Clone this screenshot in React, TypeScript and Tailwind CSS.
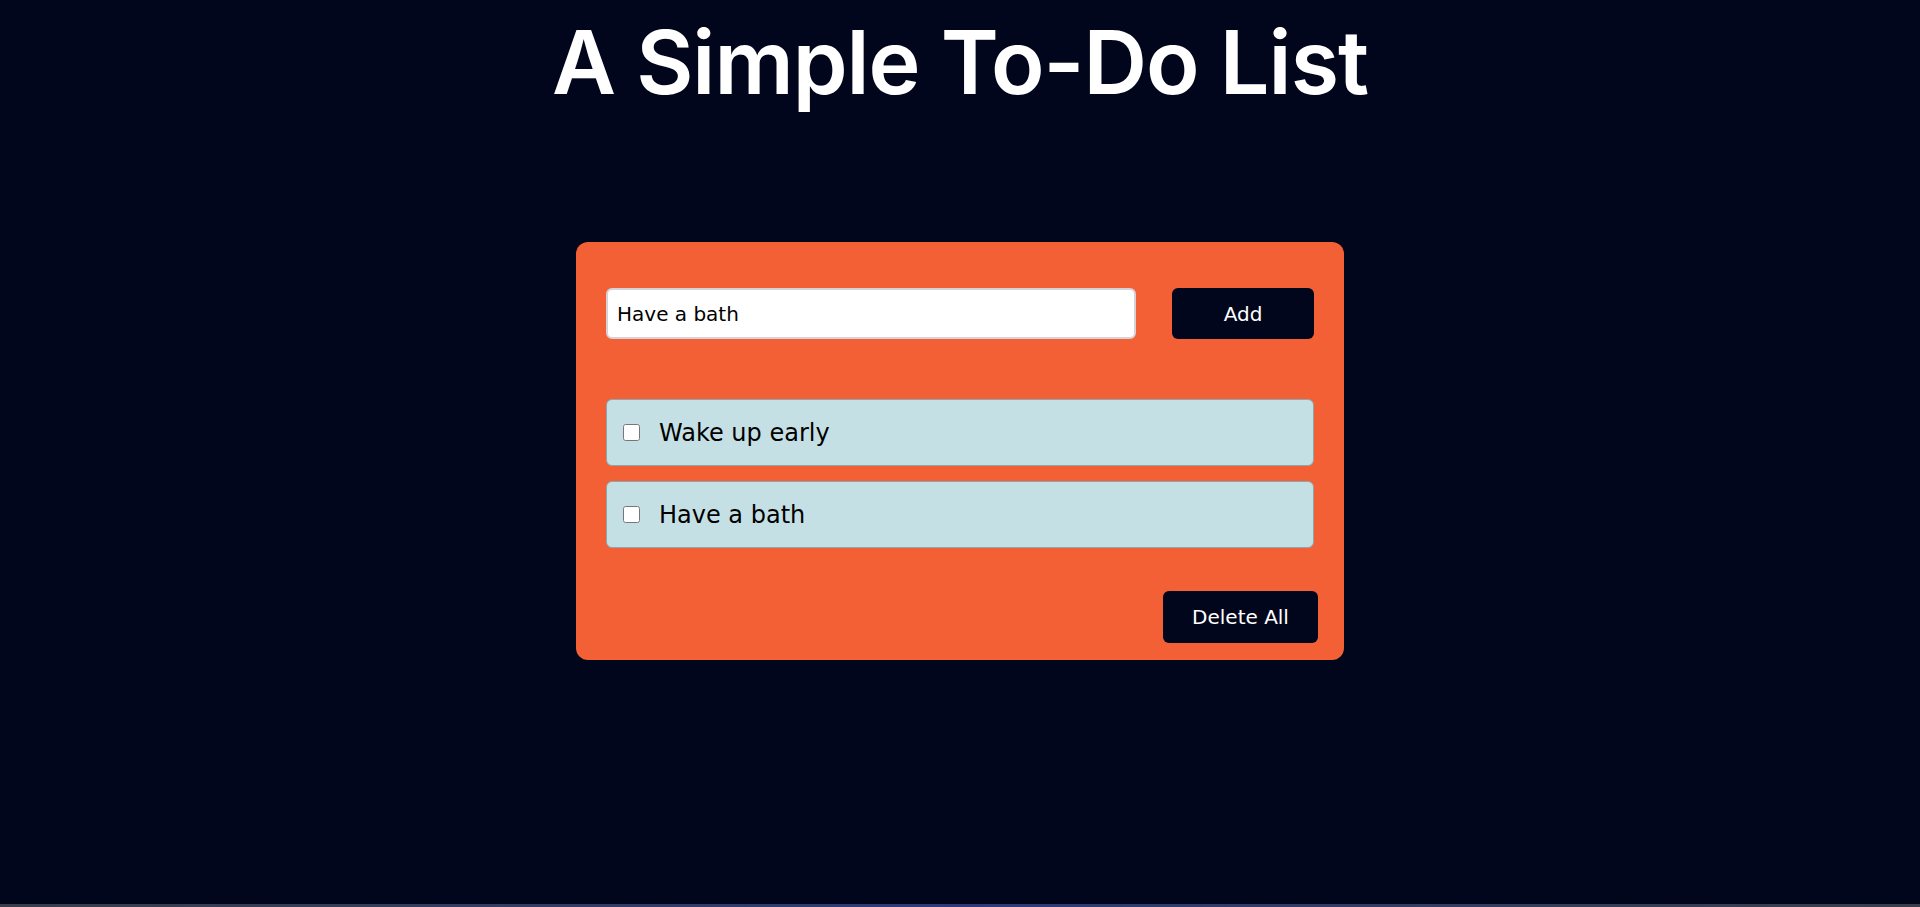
import React, { useState } from 'react';

const initialTodos = ['Wake up early', 'Have a bath'];

export default function App() {
  const [text, setText] = useState('Have a bath');
  const [todos, setTodos] = useState<string[]>(initialTodos);
  const [done, setDone] = useState<Record<number, boolean>>({});

  const addTodo = () => {
    if (!text.trim()) return;
    setTodos((prev) => [...prev, text.trim()]);
  };

  return (
    <div className="flex h-screen min-h-[907px] flex-col bg-[#01061c] font-['DejaVu_Sans',sans-serif]">
      <div className="flex-1">
        <h1 className="pt-[12px] text-center font-['Inter',sans-serif] text-[88px] leading-[100px] font-semibold tracking-[-1px] text-white">
          A Simple To-Do List
        </h1>

        <div className="mx-auto mt-[130px] w-[768px] rounded-[12px] bg-[#f46036] px-[30px] pt-[46px] pb-[17px]">
          <div className="flex items-center justify-between">
            <input
              type="text"
              value={text}
              onChange={(e) => setText(e.target.value)}
              className="h-[51px] w-[530px] rounded-[6px] border-2 border-[#d4d4d8] bg-white px-[9px] text-[20px] text-black outline-none"
            />
            <button
              type="button"
              onClick={addTodo}
              className="h-[51px] w-[142px] rounded-[6px] bg-[#01061c] text-[20px] text-white"
            >
              Add
            </button>
          </div>

          <ul className="mt-[60px] flex flex-col gap-[15px]">
            {todos.map((todo, i) => (
              <li
                key={i}
                className="flex h-[67px] items-center gap-[19px] rounded-[6px] border border-[#8fa6ab] bg-[#c5e0e5] pl-[16px]"
              >
                <input
                  type="checkbox"
                  checked={!!done[i]}
                  onChange={() => setDone((prev) => ({ ...prev, [i]: !prev[i] }))}
                  className="h-[17px] w-[17px]"
                />
                <span className="text-[24px] text-black">{todo}</span>
              </li>
            ))}
          </ul>

          <div className="mt-[43px] flex justify-end pr-[-4px]">
            <button
              type="button"
              onClick={() => setTodos([])}
              className="-mr-[4px] h-[52px] w-[155px] rounded-[6px] bg-[#01061c] text-[20px] text-white"
            >
              Delete All
            </button>
          </div>
        </div>
      </div>
      <div className="h-[3px] bg-gradient-to-r from-[#3b3e4a] via-[#2e3a78] to-[#3b3e4a]" />
    </div>
  );
}
